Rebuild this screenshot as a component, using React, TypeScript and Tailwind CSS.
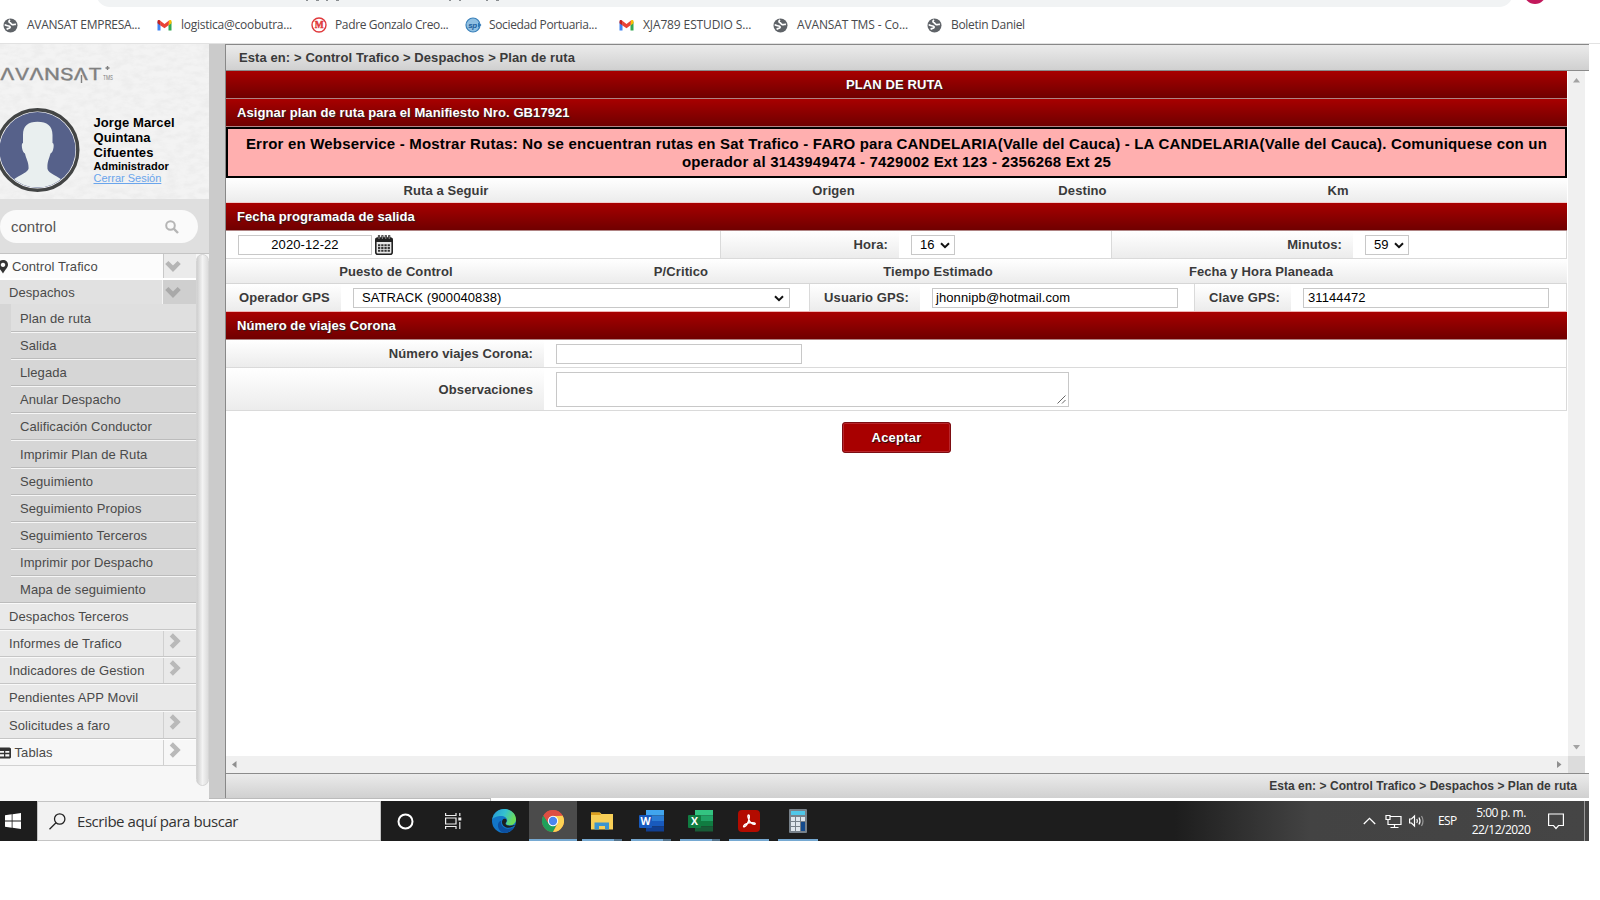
import type { ReactNode } from "react";

const red = "bg-gradient-to-b from-[#a80000] to-[#700000] text-white font-bold [text-shadow:1px_1px_1px_#222]";
const cell = "bg-gradient-to-b from-white to-[#ececec]";

function Globe() {
  return (
    <svg width="15" height="15" viewBox="0 0 15 15">
      <circle cx="7.5" cy="7.5" r="7" fill="#5f6368" />
      <path d="M1.800 6.500C3 8 5 7.500 6.500 8.200c1.200.6.6 1.800-.4 2.100-.8.200-1.800.2-2.300 1.200M7 1.800C5.800 2.800 5.500 4 6.800 4.600c1.400.5 1.200 1.700 2.500 2 1.500.3 2.200-.6 3.700-.2" fill="none" stroke="#fff" strokeWidth="1.700" />
    </svg>
  );
}

function Gmail() {
  return (
    <svg width="15" height="15" viewBox="0 0 15 15">
      <path d="M.5 3.500V12.500H3.500V5.500Z" fill="#4285f4" />
      <path d="M14.500 3.500V12.500H11.500V5.500Z" fill="#34a853" />
      <path d="M11.500 4V7.500L14.500 5.200V3.500C14.500 2 13 1.700 12 2.500Z" fill="#fbbc04" />
      <path d="M.5 5.200L3.500 7.500V4L3 2.500C2 1.700.5 2 .5 3.500Z" fill="#c5221f" />
      <path d="M3 2.500L7.500 6 12 2.500 11.500 7.300 7.500 10.300 3.500 7.500Z" fill="#ea4335" />
    </svg>
  );
}

function MBadge() {
  return (
    <svg width="16" height="16" viewBox="0 0 16 16">
      <circle cx="8" cy="8" r="7" fill="#fff" stroke="#e0393c" strokeWidth="1.400" />
      <text x="8" y="11.300" textAnchor="middle" fontSize="9.500" fontWeight="bold" fill="#e0393c" stroke="#e0393c" strokeWidth=".4" fontFamily="Liberation Serif, serif">M</text>
    </svg>
  );
}

function Port() {
  return (
    <svg width="17" height="16" viewBox="0 0 17 16">
      <circle cx="8" cy="8" r="7" fill="#8fc0e2" stroke="#3a80ba" strokeWidth="1.200" />
      <path d="M13 5.500l3.500 2.500L13 10.500Z" fill="#2f78b5" />
      <text x="7.500" y="10.500" textAnchor="middle" fontSize="8" fontWeight="bold" fontStyle="italic" fill="#1d5f9e" fontFamily="Liberation Sans, sans-serif">sp</text>
    </svg>
  );
}

const bookmarks: [ReactNode, string, string][] = [
  [<Globe />, "AVANSAT EMPRESA...", "tracking-[-0.25px]"],
  [<Gmail />, "logistica@coobutra...", "tracking-[-0.25px]"],
  [<MBadge />, "Padre Gonzalo Creo...", "tracking-[-0.36px]"],
  [<Port />, "Sociedad Portuaria...", "tracking-[-0.36px]"],
  [<Gmail />, "XJA789 ESTUDIO S...", "tracking-[-0.12px]"],
  [<Globe />, "AVANSAT TMS - Co...", "tracking-[-0.14px]"],
  [<Globe />, "Boletin Daniel", "tracking-[-0.3px]"],
];

function BrowserTop() {
  return (
    <div className="h-11 bg-white flex flex-col border-b border-[#e2e2e2]">
      <div className="h-[7px] flex pl-24">
        <div className="w-[1417px] h-[7px] overflow-hidden flex items-end shrink-0">
          <div className="w-full h-7 shrink-0 rounded-full bg-[#f1f3f4]">
            <svg width="500" height="28">
              <g fill="#8a8d90">
                <rect x="210" y="21" width="2" height="1" />
                <rect x="220" y="21" width="3" height="1" />
                <rect x="230" y="21" width="2" height="1" />
                <rect x="240" y="21" width="3" height="1" />
                <rect x="353" y="21" width="2" height="1" />
                <rect x="363" y="21" width="2" height="1" />
                <rect x="390" y="21" width="2" height="1" />
                <rect x="400" y="21" width="3" height="1" />
              </g>
            </svg>
          </div>
        </div>
        <svg width="30" height="7" className="ml-[7px] shrink-0">
          <circle cx="15" cy="-7" r="11" fill="#c2185b" />
        </svg>
      </div>
      <div className="flex h-9 items-center pl-[3px] font-['Open_Sans',sans-serif] text-[12px] text-[#47494c]">
        {bookmarks.map(([icon, label, tracking], i) => (
          <div key={i} className={`w-[154px] flex items-center shrink-0 whitespace-nowrap ${tracking}`}>
            <span className="w-6 flex shrink-0">{icon}</span>
            {label}
          </div>
        ))}
      </div>
    </div>
  );
}

function Chevron({ down, color }: { down?: boolean; color: string }) {
  return down ? (
    <svg width="16" height="12" viewBox="0 0 16 12">
      <path d="M1.800 2.500L8 8.700L14.200 2.500" fill="none" stroke={color} strokeWidth="4.500" />
    </svg>
  ) : (
    <svg width="12" height="16" viewBox="0 0 12 16">
      <path d="M2.300 1.800L8.500 8L2.300 14.200" fill="none" stroke={color} strokeWidth="4.500" />
    </svg>
  );
}

function Profile() {
  return (
    <div className="relative h-[155px] bg-[#f3f3f3] flex flex-col">
      <svg className="absolute inset-0 opacity-[0.09]" width="209" height="155">
        <filter id="fur">
          <feTurbulence type="fractalNoise" baseFrequency="0.09 0.18" numOctaves="3" seed="4" />
          <feColorMatrix values="0 0 0 0 0.45  0 0 0 0 0.45  0 0 0 0 0.45  2.500 0 0 0 -0.9" />
        </filter>
        <rect width="209" height="155" filter="url(#fur)" />
      </svg>
      <div className="relative flex h-[64px] pt-[17px]">
        <svg width="118" height="26" fontFamily="Inter, sans-serif" fill="#808080">
          <text x="0" y="18.500" fontSize="16.500" textLength="102" lengthAdjust="spacingAndGlyphs" stroke="#808080" strokeWidth=".35">ΛVΛNSΛT</text>
          <text x="103" y="19" fontSize="5.500" textLength="10" lengthAdjust="spacingAndGlyphs">TMS</text>
          <path d="M81.500 14v8M107.500 5v4M105.500 7h4" stroke="#808080" strokeWidth="1.400" />
        </svg>
      </div>
      <div className="relative flex">
        <svg width="80" height="84" viewBox="0 0 80 84" className="shrink-0">
          <clipPath id="face"><circle cx="37.500" cy="42" r="37.500" /></clipPath>
          <circle cx="37.500" cy="42" r="40.300" fill="#fff" stroke="#434545" strokeWidth="3.400" />
          <circle cx="37.500" cy="42" r="38" fill="#56618a" />
          <path clipPath="url(#face)" fill="#e9efef" d="M37.500 13.800C28 13.800 23 18 23 27v8c-1.500 0-1.500 4-.5 7 .5 2 1.500 3 2.500 3.500C26 51 29 54 28.500 61 26 66 18 67 8 76L37 84l30-8C57 67 49 66 47.500 61 47 54 49 51 50.500 45.500c1-.5 2-1.500 2.500-3.500 1-3 1-7-.5-7V27C52.500 18 47 13.800 37.500 13.800Z" />
        </svg>
        <div className="pl-[13.5px] pt-[7px] font-bold text-black text-[13px] leading-[15px] tracking-[0.08px]">
          <div>Jorge Marcel</div>
          <div>Quintana</div>
          <div>Cifuentes</div>
          <div className="text-[11px] leading-[13px] tracking-normal">Administrador</div>
          <div className="text-[11px] leading-[11px] tracking-normal font-normal text-[#6aa5ec] underline">Cerrar Sesión</div>
        </div>
      </div>
    </div>
  );
}

const submenu: [string, string][] = [
  ["Plan de ruta", "h-7 bg-[#dfdfdf] pt-0.5"],
  ["Salida", "h-[27px]"],
  ["Llegada", "h-[27px]"],
  ["Anular Despacho", "h-[27px]"],
  ["Calificación Conductor", "h-[27px]"],
  ["Imprimir Plan de Ruta", "h-7 pt-px"],
  ["Seguimiento", "h-[27px]"],
  ["Seguimiento Propios", "h-[27px]"],
  ["Seguimiento Terceros", "h-[27px]"],
  ["Imprimir por Despacho", "h-[27px]"],
  ["Mapa de seguimiento", "h-[27px]"],
];

const modules: [string, boolean, string][] = [
  ["Despachos Terceros", false, "h-[27px]"],
  ["Informes de Trafico", true, "h-[27px]"],
  ["Indicadores de Gestion", true, "h-[27px]"],
  ["Pendientes APP Movil", false, "h-[27px]"],
  ["Solicitudes a faro", true, "h-7"],
];

function ArrowCell() {
  return (
    <div className="w-[33px] border-l border-[#d0d0d0] flex justify-start pl-[5px] items-start pt-[2px]">
      <Chevron color="#b9b9b9" />
    </div>
  );
}

function Sidebar() {
  return (
    <div className="w-[209px] h-[757px] bg-[#f7f7f7] flex flex-col overflow-hidden shrink-0">
      <Profile />
      <div className="h-[55px] bg-[#dfdfdf] border-b border-[#c4c4c4] pt-[11px]">
        <div className="w-[198px] h-[33px] rounded-full bg-[#fafafa] flex items-center justify-between pl-[11px] pr-[19px] text-[15px] text-[#555]">
          <span className="pt-0.5">control</span>
          <svg width="14" height="14" viewBox="0 0 14 14" fill="none" stroke="#b5b5b5" strokeWidth="2">
            <circle cx="5.500" cy="5.500" r="4.300" />
            <path d="M8.700 8.700L13 13" strokeWidth="2.400" />
          </svg>
        </div>
      </div>
      <div className="flex text-[13px] tracking-[0.08px] text-[#4a4a4a]">
        <div className="w-[196px]">
          <div className="flex h-[26px] bg-[#fcfcfc] border-b-2 border-white">
            <div className="flex items-center w-[163px] pt-px">
              <svg width="12" height="14" viewBox="0 0 12 14">
                <path fillRule="evenodd" fill="#333" d="M3 0C6 0 8 2 8 4.800 8 7.500 5 10 3 13.500 1 10-2 7.500-2 4.800-2 2 0 0 3 0ZM3 2.700a2.200 2.200 0 1 0 .01 0Z" />
              </svg>
              Control Trafico
            </div>
            <div className="w-[33px] bg-[#ebebeb] border-l border-[#c8c8c8] pt-1.5 pl-px"><Chevron down color="#b5b5b5" /></div>
          </div>
          <div className="flex h-6">
            <div className="flex items-center w-[162px] pl-[9px] bg-[#e1e1e1] pt-px">Despachos</div>
            <div className="w-[34px] bg-[#cfcfcf] border-l border-[#f5f5f5] pt-1.5 pl-0.5"><Chevron down color="#a9a9a9" /></div>
          </div>
          <div className="pl-[11px] bg-[#d6d6d6] border-b border-[#bcbcbc] h-[299px]">
            {submenu.map(([label, cls], i) => (
              <div key={label} className={`${cls} ${i ? "border-t border-t-[#f6f6f6]" : ""} ${i < 10 ? "border-b border-b-[#bcbcbc]" : ""} flex items-center pl-[9px]`}>
                {label}
              </div>
            ))}
          </div>
          {modules.map(([label, arrow, h]) => (
            <div key={label} className={`${h} flex bg-[#e9e9e9] border-t border-t-[#f9f9f9] border-b border-b-[#c6c6c6]`}>
              <div className={`flex items-center flex-1 pl-[9px] ${h === "h-7" ? "pt-px" : ""}`}>{label}</div>
              {arrow && <ArrowCell />}
            </div>
          ))}
          <div className="flex h-[27px] bg-[#f7f7f7] border-t border-t-white border-b border-b-[#d2d2d2]">
            <div className="flex items-center flex-1 gap-[3.5px]">
              <svg width="11" height="12" viewBox="0 0 11 12">
                <path fillRule="evenodd" fill="#333" d="M-2 .5H9.500L11 1.500V10.500L10 11.500H-2ZM0 4V5.800H4V4ZM5.300 4V5.800H9.300V4ZM0 7.300V9.500H4V7.300ZM5.300 7.300V9.500H9.300V7.300Z" />
              </svg>
              Tablas
            </div>
            <ArrowCell />
          </div>
        </div>
        <div className="w-[13px] h-[532px] rounded-full bg-gradient-to-r from-[#cfcfcf] via-[#f3f3f3] to-[#dcdcdc] border border-[#d4d4d4]" />
      </div>
    </div>
  );
}

function Box({ className, children }: { className: string; children?: ReactNode }) {
  return <div className={`border border-[#c8c8c8] bg-white text-black h-5 flex items-center shrink-0 pt-px ${className}`}>{children}</div>;
}

function Caret() {
  return (
    <svg width="10" height="7" viewBox="0 0 10 7">
      <path d="M1 1.300L5 5.200L9 1.300" fill="none" stroke="#111" strokeWidth="2" />
    </svg>
  );
}

function Title({ children, center }: { children: string; center?: boolean }) {
  return (
    <div className={`h-7 border-b border-[#b08484] flex items-center ${center ? "justify-center pr-1" : "px-[11px]"} ${red}`}>{children}</div>
  );
}

function Content() {
  const label = `flex items-center shrink-0 font-bold text-[#3a3a3a] ${cell}`;
  return (
    <div className="w-[1341px] h-[685px] text-[13px] tracking-[0.09px] flex flex-col bg-white">
      <Title center>PLAN DE RUTA</Title>
      <Title>Asignar plan de ruta para el Manifiesto Nro. GB17921</Title>
      <div className="h-[51px] border-2 border-black bg-[#ffafaf] flex flex-col items-center justify-center font-bold text-[15px] leading-[18px] tracking-[0.2px] text-black whitespace-nowrap">
        <div>Error en Webservice - Mostrar Rutas: No se encuentran rutas en Sat Trafico - FARO para CANDELARIA(Valle del Cauca) - LA CANDELARIA(Valle del Cauca). Comuniquese con un</div>
        <div>operador al 3143949474 - 7429002 Ext 123 - 2356268 Ext 25</div>
      </div>
      <div className={`h-[25px] pt-0.5 border-b border-[#f0cccc] flex items-center text-center font-bold text-[#3a3a3a] ${cell}`}>
        <div className="w-[440px]">Ruta a Seguir</div>
        <div className="w-[335px]">Origen</div>
        <div className="w-[163px]">Destino</div>
        <div className="w-[348px]">Km</div>
      </div>
      <Title>Fecha programada de salida</Title>
      <div className="h-7 flex border-b border-r border-[#dadada]">
        <div className="w-[495px] border-r border-[#dadada] flex items-center pl-3 gap-[3px] shrink-0">
          <Box className="w-[134px] justify-center">2020-12-22</Box>
          <svg width="18" height="20" viewBox="0 0 18 20">
            <rect x=".8" y="3" width="16.400" height="16.200" rx="2" fill="#e8e8e8" stroke="#222" strokeWidth="1.600" />
            <path d="M.8 3h16.400v4H.8z" fill="#222" />
            <path d="M4 .3v4M7.400 .3v4M10.800 .3v4M14.200 .3v4" stroke="#222" strokeWidth="2.200" />
            <path d="M4 1v3M7.400 1v3M10.800 1v3M14.200 1v3" stroke="#bbb" strokeWidth=".7" />
            <path d="M3 10.200h12M3 13h12M3 15.800h12" stroke="#333" strokeWidth="2" strokeDasharray="2.300 .9" />
          </svg>
        </div>
        <div className={`${label} w-[178px] justify-end pr-[11px]`}>Hora:</div>
        <div className="w-[213px] border-r border-[#dadada] flex items-center pl-3 shrink-0">
          <Box className="w-11 pl-2 gap-[5px]">16<Caret /></Box>
        </div>
        <div className={`${label} w-[241px] justify-end pr-[11px]`}>Minutos:</div>
        <div className="flex items-center pl-3"><Box className="w-11 pl-2 gap-[5px]">59<Caret /></Box></div>
      </div>
      <div className={`h-[25px] pt-0.5 border-b border-[#d6d6d6] flex items-center text-center font-bold text-[#3a3a3a] ${cell}`}>
        <div className="w-[340px]">Puesto de Control</div>
        <div className="w-[230px]">P/Critico</div>
        <div className="w-[284px]">Tiempo Estimado</div>
        <div className="w-[362px]">Fecha y Hora Planeada</div>
      </div>
      <div className="h-7 flex border-b border-b-[#f0b4b4] border-r border-r-[#dadada]">
        <div className={`${label} w-[115px] pl-[13px]`}>Operador GPS</div>
        <div className="w-[469px] border-r border-[#dadada] flex items-center pl-3 shrink-0">
          <Box className="w-[437px] pl-2 pr-[5px] justify-between">SATRACK (900040838)<Caret /></Box>
        </div>
        <div className={`${label} w-[110px] justify-end pr-[11px]`}>Usuario GPS:</div>
        <div className="w-[275px] border-r border-[#dadada] flex items-center pl-3 shrink-0">
          <Box className="w-[246px] pl-[3px]">jhonnipb@hotmail.com</Box>
        </div>
        <div className={`${label} w-[96px] justify-end pr-[11px]`}>Clave GPS:</div>
        <div className="flex items-center pl-3"><Box className="w-[246px] pl-1">31144472</Box></div>
      </div>
      <Title>Número de viajes Corona</Title>
      <div className="h-7 flex border-b border-r border-[#dadada] shrink-0">
        <div className={`${label} w-[318px] justify-end pr-[11px]`}>Número viajes Corona:</div>
        <div className="flex items-center pl-3"><Box className="w-[246px]" /></div>
      </div>
      <div className="h-[43px] flex border-b border-r border-[#dadada] shrink-0">
        <div className={`${label} w-[318px] justify-end pr-[11px] pt-px`}>Observaciones</div>
        <div className="flex items-start pl-3 pt-1">
          <div className="w-[513px] h-[35px] border border-[#c8c8c8] flex items-end justify-end p-0.5">
            <svg width="9" height="9"><path d="M.5 8.500L8.500 .5M5 8.500L8.500 5" stroke="#666" /></svg>
          </div>
        </div>
      </div>
      <div className="flex justify-center pt-[11px]">
        <div className="w-[109px] h-[31px] rounded-[3px] bg-[#a80000] border border-[#7c0d12] shadow-[inset_0_0_0_1px_#b8262c] text-white font-bold flex items-center justify-center [text-shadow:1px_1px_1px_#111] tracking-[0.2px]">Aceptar</div>
      </div>
    </div>
  );
}

function Main() {
  const crumb = "flex items-center bg-gradient-to-b from-[#ebebeb] to-[#d0d0d0] font-bold text-[#3a3a3a] shrink-0";
  return (
    <div className="w-[1364px] h-[754px] border-l border-t border-[#888] flex flex-col">
      <div className={`${crumb} h-[26px] border-b border-[#8b8b8b] pl-[13px] text-[13px] tracking-[0.09px]`}>Esta en: &gt; Control Trafico &gt; Despachos &gt; Plan de ruta</div>
      <div className="flex h-[685px]">
        <Content />
        <div className="w-[17px] ml-px bg-[#f0f0f0] flex flex-col justify-between items-center pt-[7px] pb-[6px]">
          <svg width="7" height="5"><path d="M3.500 0L7 4.500H0Z" fill="#a3a3a3" /></svg>
          <svg width="7" height="5"><path d="M0 0H7L3.500 4.500Z" fill="#a3a3a3" /></svg>
        </div>
      </div>
      <div className="flex h-[17px] shrink-0">
        <div className="w-[1342px] bg-[#f0f0f0] flex items-center justify-between px-[6px]">
          <svg width="5" height="7"><path d="M4.500 0V7L0 3.500Z" fill="#8f8f8f" /></svg>
          <svg width="5" height="7"><path d="M0 0V7L4.500 3.500Z" fill="#8f8f8f" /></svg>
        </div>
        <div className="w-[17px] bg-[#dcdcdc]" />
      </div>
      <div className={`${crumb} h-[25px] border-t border-[#8b8b8b] justify-end pr-[12px] text-[12px] tracking-[0.04px]`}>Esta en: &gt; Control Trafico &gt; Despachos &gt; Plan de ruta</div>
    </div>
  );
}

function Edge() {
  return (
    <svg width="24" height="24" viewBox="0 0 24 24">
      <defs>
        <linearGradient id="eg" x1="0" y1="0" x2="1" y2=".35"><stop offset="0" stopColor="#2596d8" /><stop offset=".55" stopColor="#35c1d0" /><stop offset="1" stopColor="#6bdc5a" /></linearGradient>
      </defs>
      <circle cx="12" cy="12" r="12" fill="#1276c8" />
      <path d="M.2 10.500C1.500 4 6.500 0 12 0c7 0 12 5 12 10.500 0 3.500-2.800 5.800-6 5.800-2.500 0-4-.8-4-1.800 0-.8 1.200-1.200 1.200-3C15.200 9 12.500 7 9 7 5.500 7 1.500 8.500.2 10.500Z" fill="url(#eg)" />
      <path d="M9.500 11.500C8 15 10.500 19.500 15.500 19.700c2.500.1 5-.8 6.700-2C20 21.500 16.500 24 12.500 24 8 23 5.500 19 6 15.500c.3-2 1.500-3.500 3.500-4Z" fill="#0c4fa0" />
      <path d="M10.500 11c-1.500 2.800.5 7.200 5 7.700 3 .3 5.500-.9 7.200-2.200.4-.4 0-.7-.4-.5-1.300.6-2.800.8-4.300.8-2.500 0-4.500-1-4.500-2.300 0-.8 1.200-1.200 1.200-3C14.500 9.500 11.500 9.200 10.500 11Z" fill="#1d1d1d" />
    </svg>
  );
}

function Chrome() {
  return (
    <svg width="22" height="22" viewBox="0 0 22 22">
      <circle cx="11" cy="11" r="11" fill="#dd4f43" />
      <path d="M1.470 5.500A11 11 0 0 0 11 22L15.330 13.500 11 11 6.670 13.500Z" fill="#1fa05a" />
      <path d="M20.530 5.500A11 11 0 0 1 11 22L15.500 13.500 11 6Z" fill="#fdd254" />
      <path d="M1.470 5.500A11 11 0 0 1 20.530 5.500L11 6 6.700 13.500Z" fill="#dd4f43" />
      <circle cx="11" cy="11" r="5.200" fill="#fff" />
      <circle cx="11" cy="11" r="4.200" fill="#4b86ee" />
    </svg>
  );
}

function Explorer() {
  return (
    <svg width="22" height="20" viewBox="0 0 22 20">
      <path d="M0 1.500H9L10.500 3H22V18.500H0Z" fill="#f8cf57" />
      <path d="M0 1.500H8.500L10 4H0Z" fill="#dd9f1f" />
      <path d="M3.500 18.500V11.500H18V18.500H14V15H8V18.500Z" fill="#3b94cf" />
    </svg>
  );
}

function Office({ letter, c }: { letter: string; c: string[] }) {
  return (
    <svg width="25" height="22" viewBox="0 0 25 22">
      <rect x="7" y="0" width="18" height="5.500" fill={c[0]} />
      <rect x="7" y="5.500" width="18" height="5.500" fill={c[1]} />
      <rect x="7" y="11" width="18" height="5.500" fill={c[2]} />
      <rect x="7" y="16.500" width="18" height="5" fill={c[3]} />
      <rect x="0" y="5" width="13" height="13" rx="1" fill={c[4]} />
      <text x="6.500" y="15.300" fontSize="10.500" fontWeight="bold" fill="#fff" textAnchor="middle" fontFamily="Open Sans, sans-serif">{letter}</text>
    </svg>
  );
}

function Acrobat() {
  return (
    <svg width="22" height="22" viewBox="0 0 22 22">
      <rect width="22" height="22" rx="4" fill="#b30b00" />
      <path d="M10 5.200c1.500-.9 1.700 1.500 1 4-.8 3-3 7-4.700 7.600-1.500.3-.8-2 2.200-3.200 3-1.200 8-1.500 8.700-.3.500 1.500-2.300 1.300-4.200-.5C11 11 9.300 6.500 10 5.200Z" fill="none" stroke="#fff" strokeWidth="1.300" />
    </svg>
  );
}

function Calculator() {
  return (
    <svg width="18" height="24" viewBox="0 0 18 24">
      <rect width="18" height="24" rx="1" fill="#77818a" />
      <rect x="2" y="2" width="14" height="4" fill="#4fc7e8" />
      <g fill="#dfe6ec">
        <rect x="2" y="8" width="4" height="4" /><rect x="7" y="8" width="4" height="4" /><rect x="12" y="8" width="4" height="4" />
        <rect x="2" y="13" width="4" height="4" /><rect x="7" y="13" width="4" height="4" />
        <rect x="2" y="18" width="4" height="4" /><rect x="7" y="18" width="4" height="4" />
      </g>
      <rect x="12" y="13" width="4" height="9" fill="#144a8c" />
    </svg>
  );
}

const apps: [ReactNode, boolean][] = [
  [<Explorer />, true],
  [<Office letter="W" c={["#41a5ee", "#2b7cd3", "#185abd", "#103f91", "#185abd"]} />, true],
  [<Office letter="X" c={["#33c481", "#21a366", "#107c41", "#185c37", "#107c41"]} />, true],
  [<Acrobat />, false],
  [<Calculator />, false],
];

function Taskbar() {
  return (
    <div className="w-[1589px] h-10 flex bg-[linear-gradient(90deg,#1d1d1d_0,#1d1d1d_1175px,#434343_1310px,#454545_1584px)] text-white font-['Open_Sans',sans-serif]">
      <div className="w-[37px] flex items-center pl-[5px]">
        <svg width="16" height="16" viewBox="0 0 16 16" fill="#fff"><path d="M0 2.200L6.700 1.300V7.600H0ZM7.500 1.200L16 0V7.600H7.500ZM0 8.400H6.700V14.700L0 13.800ZM7.500 8.400H16V16L7.500 14.800Z" /></svg>
      </div>
      <div className="w-[344px] border border-[#c4c4c4] bg-[#f2f2f2] flex items-center pl-[11px] gap-[11px] text-[#333] text-[15px] tracking-[-0.44px]">
        <svg width="17" height="17" viewBox="0 0 17 17" fill="none" stroke="#222" strokeWidth="1.300"><circle cx="10.700" cy="6" r="5.200" /><path d="M7 9.700L.5 16.300" /></svg>
        Escribe aquí para buscar
      </div>
      <div className="w-12 flex items-center justify-center"><svg width="17" height="17"><circle cx="8.500" cy="8.500" r="7" fill="none" stroke="#fff" strokeWidth="2" /></svg></div>
      <div className="w-12 flex items-center justify-center">
        <svg width="17" height="16" viewBox="0 0 17 16" fill="none" stroke="#eee" strokeWidth="1.200"><path d="M.6 0V2.500H11V0M.6 16V13.500H11V16M.6 5H11V11H.6ZM14.800 0V3M14.800 9V16" /><path d="M13.300 4.500h3v3h-3z" fill="#eee" stroke="none" /></svg>
      </div>
      <div className="w-[52px] flex items-center justify-center pl-0.5"><Edge /></div>
      <div className="w-12 bg-[#4b4b4b] border-b-2 border-[#76a9d2] flex items-center justify-center pt-0.5"><Chrome /></div>
      <div className="flex pl-[5px] gap-[9px]">
        {apps.map(([icon, multi], i) => (
          <div key={i} className="w-10 flex flex-col">
            <div className="h-[38px] flex items-center justify-center pt-0.5">{icon}</div>
            <div className="h-0.5 bg-[#76a9d2] flex justify-end">{multi && <div className="w-2 h-0.5 bg-[#54738c]" />}</div>
          </div>
        ))}
      </div>
      <div className="flex-1 flex items-center justify-end text-[12px] tracking-[-0.5px]">
        <svg width="13" height="8" viewBox="0 0 13 8" className="mr-[9px]"><path d="M.8 7L6.500 1.300L12.200 7" fill="none" stroke="#fff" strokeWidth="1.300" /></svg>
        <svg width="17" height="15" viewBox="0 0 17 15" fill="none" stroke="#fff" strokeWidth="1.200" className="mr-[7px]"><path d="M5.500 2.500H16V10.500H3V6.500M9.500 10.500V13.500M5.500 13.500H13.500M1 1.500H5V5.500H1ZM3 5.500V8" /></svg>
        <svg width="17" height="14" viewBox="0 0 17 14" fill="none" stroke="#fff" strokeWidth="1.200" className="mr-[12px]"><path d="M.6 5H2.500L5.500 2V12L2.500 9H.6ZM7.800 5Q9 7 7.800 9M10 3.500Q12 7 10 10.500" /><path d="M12.500 2Q15.500 7 12.500 12" stroke="#999" /></svg>
        <span className="w-[22px] tracking-[-0.6px]">ESP</span>
        <div className="w-[82px] text-center leading-[17px] flex flex-col -mt-px">
          <span>5:00 p. m.</span>
          <span>22/12/2020</span>
        </div>
        <svg width="16" height="17" viewBox="0 0 16 17" fill="none" stroke="#fff" strokeWidth="1.200" className="ml-[6px]"><path d="M.6 1H15.400V12.500H10.500L8 15.500L5.500 12.500H.6Z" /></svg>
        <div className="w-[25px] flex justify-end h-10 self-stretch pr-1"><div className="w-px bg-[#999]" /></div>
      </div>
    </div>
  );
}

export default function App() {
  return (
    <div className="w-[1600px] h-[900px] bg-white overflow-hidden font-['Liberation_Sans',Arial,sans-serif]">
      <BrowserTop />
      <div className="flex h-[757px]">
        <Sidebar />
        <div className="flex flex-col">
          <div className="flex h-[754px]">
            <div className="w-4 bg-[#cbcbcb] shrink-0" />
            <Main />
          </div>
          <div className="w-[282px] h-[3px] border-t border-r border-[#bbb]" />
        </div>
      </div>
      <Taskbar />
    </div>
  );
}
